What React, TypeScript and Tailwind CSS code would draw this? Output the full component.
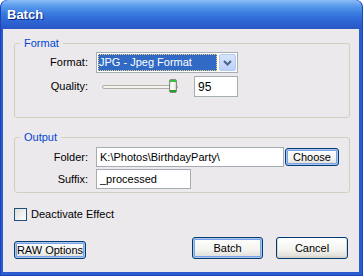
import React from "react";

const font = { fontFamily: '"Liberation Sans", Arial, sans-serif' };

function XPButton({ label, w, h, focused }: { label: string; w: string; h: string; focused?: boolean }) {
  return (
    <div
      className={`${w} ${h} rounded-[3px] border border-[#003C74] flex items-center justify-center text-[11px] text-black bg-[linear-gradient(#FFFFFF,#F3F3EF_60%,#DCDAD2)] ${
        focused ? "shadow-[inset_0_0_0_1px_#A8C6F0,inset_0_0_0_2px_#7BA2E7]" : "shadow-[inset_0_-1px_0_1px_#D8D5CC]"
      }`}
    >
      {label}
    </div>
  );
}

export default function App() {
  return (
    <div style={font} className="w-[363px] h-[276px] flex flex-col rounded-t-[7px] overflow-hidden bg-[#2A5BD0] border border-[#1C46B8] border-t-0">
      <div className="h-[29px] shrink-0 flex items-center px-[6px] bg-[linear-gradient(#8CBDF7,#5A9BEC_20%,#3A7DE0_45%,#2E68D6_70%,#2856C4)] rounded-t-[7px]">
        <span className="text-white font-bold text-[13px] [text-shadow:1px_1px_0_#0A2A7A]">Batch</span>
      </div>
      <div className="flex-1 ml-[2px] mr-[3px] mb-[3px] bg-[#ECE9EC] pl-[11px] pr-[9px] pt-[8px] flex flex-col text-[11px] text-black">
        <fieldset className="border border-[#D0D0BF] rounded-[3px] pl-0 pb-[20px]">
          <legend className="ml-[5px] px-[4px] text-[#0046D5] leading-[13px]">Format</legend>
          <div className="flex items-center h-[21px] mt-[2px]">
            <div className="w-[73px] text-right">Format:</div>
            <div className="ml-[8px] w-[142px] h-[21px] border border-[#A5ACB2] bg-white flex items-stretch p-[1px]">
              <div className="flex-1 bg-[#316AC5] text-white flex items-center pl-[1px] outline outline-1 outline-dotted outline-[#F5D27A] -outline-offset-1 mr-[2px]">
                JPG - Jpeg Format
              </div>
              <div className="w-[17px] rounded-[2px] border border-[#B6C9F1] bg-[linear-gradient(#D7E4FC,#BCD0F8)] flex items-center justify-center">
                <svg width="9" height="6" viewBox="0 0 9 6">
                  <path d="M1 1 L4.5 4.5 L8 1" stroke="#4D6185" strokeWidth="2" fill="none" />
                </svg>
              </div>
            </div>
          </div>
          <div className="flex items-center h-[21px] mt-[3px]">
            <div className="w-[73px] text-right">Quality:</div>
            <div className="ml-[14px] w-[76px] relative h-[21px] flex items-center">
              <div className="w-full h-[4px] border border-[#B0AFA8] rounded-[2px] bg-[#F4F3EE] mt-[1px]" />
              <div className="absolute left-[67px] top-[3px] w-[8px] h-[14px] rounded-[2px] border border-[#8A8A80] bg-[linear-gradient(90deg,#E8E8E0,#FFFFFF,#D8D8D0)] flex flex-col justify-between">
                <div className="h-[2px] bg-[#3CC03C]" />
                <div className="h-[2px] bg-[#21A121]" />
              </div>
            </div>
            <div className="ml-[16px] w-[44px] h-[21px] border border-[#A5ACB2] bg-white flex items-center pl-[3px] text-[12px]">95</div>
          </div>
        </fieldset>
        <fieldset className="mt-[13px] border border-[#D0D0BF] rounded-[3px] pb-[3px]">
          <legend className="ml-[5px] px-[4px] text-[#0046D5] leading-[13px]">Output</legend>
          <div className="flex items-center h-[20px] mt-[3px]">
            <div className="w-[73px] text-right">Folder:</div>
            <div className="ml-[8px] w-[188px] h-[20px] border border-[#A5ACB2] bg-white flex items-center pl-[3px] text-[11px]">K:\Photos\BirthdayParty\</div>
            <div className="ml-[1px]">
              <XPButton label="Choose" w="w-[54px]" h="h-[18px]" focused />
            </div>
          </div>
          <div className="flex items-center h-[20px] mt-[2px]">
            <div className="w-[73px] text-right">Suffix:</div>
            <div className="ml-[8px] w-[95px] h-[20px] border border-[#A5ACB2] bg-white flex items-center pl-[3px] text-[11px]">_processed</div>
          </div>
        </fieldset>
        <div className="mt-[15px] flex items-center h-[13px]">
          <div className="w-[13px] h-[13px] border border-[#1C5180] bg-[linear-gradient(135deg,#DCDCD7,#FFFFFF)]" />
          <span className="ml-[4px] text-[11px]">Deactivate Effect</span>
        </div>
        <div className="mt-[16px] flex items-end">
          <XPButton label="RAW Options" w="w-[72px]" h="h-[18px]" focused />
          <div className="ml-auto flex gap-[13px] mr-[2px]">
            <XPButton label="Batch" w="w-[71px]" h="h-[22px]" focused />
            <XPButton label="Cancel" w="w-[72px]" h="h-[22px]" />
          </div>
        </div>
      </div>
    </div>
  );
}
